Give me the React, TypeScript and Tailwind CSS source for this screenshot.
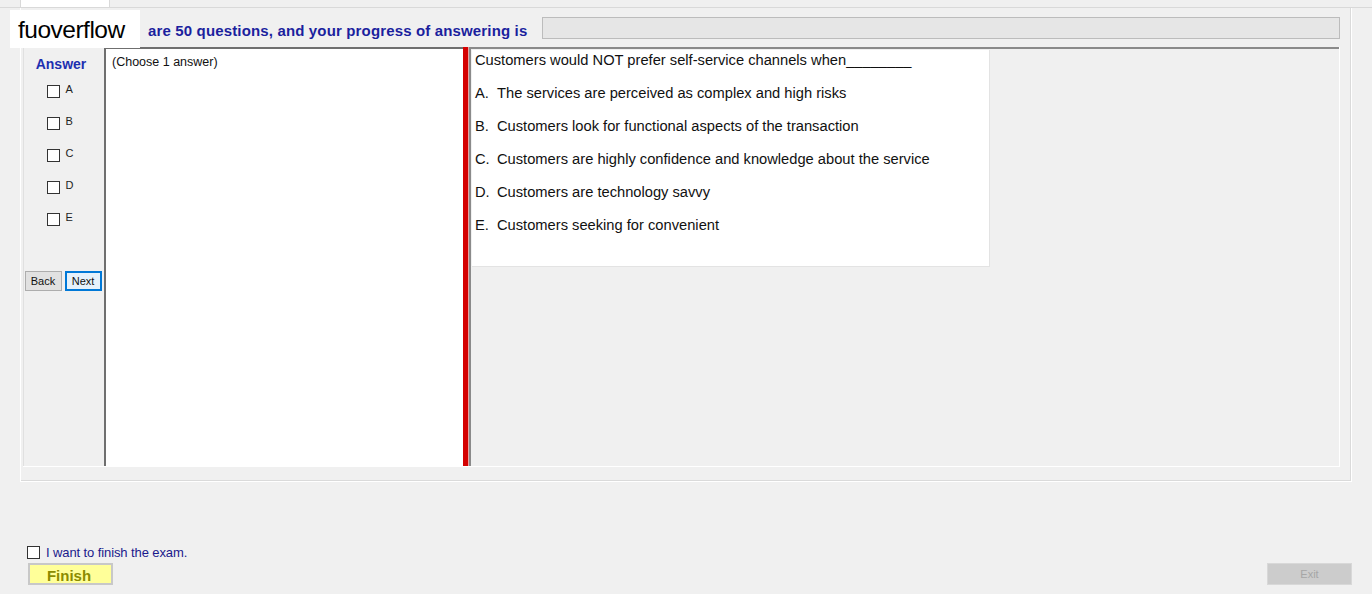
import React from "react";

const options = [
  { key: "A", text: "The services are perceived as complex and high risks" },
  { key: "B", text: "Customers look for functional aspects of the transaction" },
  { key: "C", text: "Customers are highly confidence and knowledge about the service" },
  { key: "D", text: "Customers are technology savvy" },
  { key: "E", text: "Customers seeking for convenient" },
];

const Box = () => (
  <span className="inline-block w-[13px] h-[13px] border border-[#333] bg-white shrink-0" />
);

export default function App() {
  return (
    <div className="relative w-[1372px] h-[594px] overflow-hidden bg-[#f0f0f0] font-['Liberation_Sans',Arial,sans-serif] text-black">
      {/* tab strip */}
      <div className="flex h-[8px] border-b border-[#d9d9d9]">
        <div className="ml-[20px] w-[90px] h-full bg-white border-l border-r border-[#d9d9d9]" />
      </div>

      {/* tab page */}
      <div className="ml-[20px] w-[1332px] h-[474px] border-l border-r border-b border-white shadow-[inset_-1px_-1px_0_#dadada] pt-[9px]">
        <div className="flex items-center h-[22px]">
          <span className="ml-[127px] w-[394px] pt-[7px] text-[15px] font-bold text-[#1b1f9e] tracking-[0.15px] whitespace-nowrap">
            are 50 questions, and your progress of answering is
          </span>
          <div className="w-[798px] h-[22px] bg-[#e6e6e6] border border-[#bcbcbc]" />
        </div>

        <div className="flex mt-[8px] ml-[2px] w-[1317px] h-[420px] border-r border-b border-white">
          {/* answer column */}
          <div className="w-[81px] flex flex-col items-center pt-[7px] border-l border-[#e0e0e0]">
            <span className="text-[14px] font-bold text-[#1d2fb0] ml-[-6px]">Answer</span>
            <div className="flex flex-col gap-[19px] mt-[10px] ml-[-8px]">
              {options.map((o) => (
                <div key={o.key} className="flex items-center gap-[6px] h-[13px]">
                  <Box />
                  <span className="text-[11px] leading-none text-[#222] mt-[-4px]">{o.key}</span>
                </div>
              ))}
            </div>
            <div className="flex gap-[3px] mt-[45px] ml-[-2px]">
              <button className="w-[37px] h-[20px] bg-[#e1e1e1] border border-[#adadad] text-[11px] text-[#111]">
                Back
              </button>
              <button className="w-[37px] h-[20px] bg-[#e5f1fb] border-2 border-[#0078d7] text-[11px] text-[#111]">
                Next
              </button>
            </div>
          </div>

          {/* choose panel */}
          <div className="w-[359px] h-full bg-white border-l-2 border-t-2 border-[#6f6f6f] px-[6px]">
            <span className="text-[12.5px] text-[#111] leading-[22px]">(Choose 1 answer)</span>
          </div>

          {/* splitter */}
          <div className="w-[6px] h-full bg-[#d40000] border-r border-[#e8a0a0]" />

          {/* question area */}
          <div className="flex-1 h-full border-t-2 border-l-2 border-[#8a8a8a] pl-[1px] pt-[1px]">
            <div className="w-[518px] h-[217px] bg-white border-r border-b border-[#e3e3e3] pl-[3px] text-[14.7px] text-[#111]">
              <div className="h-[33px] leading-[20px]">
                Customers would NOT prefer self-service channels when________
              </div>
              {options.map((o) => (
                <div key={o.key} className="h-[33px] leading-[20px] flex">
                  <span className="w-[22px]">{o.key}.</span>
                  <span>{o.text}</span>
                </div>
              ))}
            </div>
          </div>
        </div>
      </div>

      {/* finish area */}
      <div className="flex items-center gap-[6px] mt-[63px] ml-[27px] h-[14px]">
        <Box />
        <span className="text-[13px] text-[#1a1a8c] tracking-[-0.1px] pt-[2px]">I want to finish the exam.</span>
      </div>
      <div className="flex justify-between mt-[4px] ml-[28px] w-[1324px]">
        <button className="w-[85px] h-[22px] bg-[#ffff99] border-2 border-[#c8c8c8] text-[15px] font-bold text-[#8b8b00] pr-[3px]">
          Finish
        </button>
        <button className="w-[85px] h-[22px] bg-[#cccccc] border border-[#d8d8d8] text-[11px] text-[#a6a6a6]">
          Exit
        </button>
      </div>

      {/* watermark logo */}
      <div className="absolute left-[10px] top-[10px] w-[130px] h-[38px] bg-white flex items-center pl-[8px] pt-[3px]">
        <span className="text-[24.5px] text-black tracking-[-0.5px]">fuoverflow</span>
      </div>
    </div>
  );
}
